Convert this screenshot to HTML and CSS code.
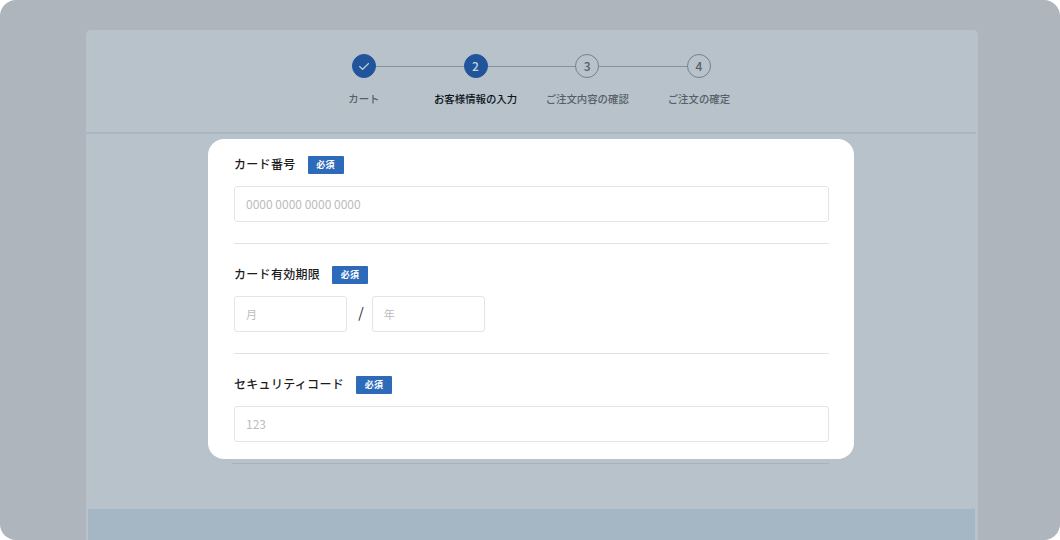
FILE: index.html
```html
<!DOCTYPE html>
<html lang="ja">
<head>
<meta charset="utf-8">
<title>お客様情報の入力</title>
<link rel="stylesheet" href="styles.css">
</head>
<body>
<div class="screen">
  <main class="panel">
    <header class="header">
      <ol class="steps">
        <li class="step step--done">
          <span class="step__mark"><svg class="step__check" viewBox="0 0 24 24"><path d="M7.3 12.2 L10.6 15.3 L16.8 9.2"/></svg></span>
          <span class="step__label">カート</span>
        </li>
        <li class="step step--current">
          <span class="step__mark">2</span>
          <span class="step__label">お客様情報の入力</span>
        </li>
        <li class="step">
          <span class="step__mark">3</span>
          <span class="step__label">ご注文内容の確認</span>
        </li>
        <li class="step">
          <span class="step__mark">4</span>
          <span class="step__label">ご注文の確定</span>
        </li>
      </ol>
    </header>
    <form class="card">
      <section class="field">
        <div class="field__head"><span class="field__label">カード番号</span><span class="badge">必須</span></div>
        <div class="input">0000 0000 0000 0000</div>
      </section>
      <section class="field">
        <div class="field__head"><span class="field__label">カード有効期限</span><span class="badge">必須</span></div>
        <div class="expiry">
          <div class="input input--short">月</div>
          <span class="expiry__slash">/</span>
          <div class="input input--short">年</div>
        </div>
      </section>
      <section class="field field--last">
        <div class="field__head"><span class="field__label">セキュリティコード</span><span class="badge">必須</span></div>
        <div class="input">123</div>
      </section>
    </form>
    <hr class="rule">
    <footer class="footer"></footer>
  </main>
</div>
</body>
</html>
```
FILE: styles.css
```css
* { box-sizing: border-box; }

body {
  margin: 0;
  background: #fff;
  font-family: "Noto Sans CJK JP", sans-serif;
}

.screen {
  width: 1060px;
  height: 540px;
  padding: 30px 82px 0 86px;
  border-radius: 16px;
  background: #aeb5bd;
  overflow: hidden;
}

.panel {
  display: flex;
  flex-direction: column;
  height: 510px;
  border-radius: 5px 5px 0 0;
  background: #b7c2cb;
}

.header {
  height: 104px;
  margin-right: 2px;
  padding-top: 24px;
  border-bottom: 2px solid #aab6c0;
}

.steps {
  display: flex;
  width: 447px;
  margin: 0 0 0 222px;
  padding: 0;
  list-style: none;
}

.step {
  position: relative;
  display: flex;
  flex: none;
  flex-direction: column;
  align-items: center;
  width: 111.7px;
  color: #555f67;
}

.step + .step::before {
  content: "";
  position: absolute;
  top: 12px;
  right: calc(50% + 12px);
  width: 87.7px;
  height: 1px;
  background: #87919a;
}

.step__mark {
  display: flex;
  align-items: center;
  justify-content: center;
  width: 24px;
  height: 24px;
  margin-top: 0.4px;
  border: 1px solid #76808a;
  border-radius: 50%;
  font-size: 12px;
  font-weight: 500;
  line-height: 24px;
}

.step--done .step__mark,
.step--current .step__mark {
  border-color: #20559c;
  background: #20559c;
  color: #c3d1de;
}

.step__check {
  flex: none;
  width: 24px;
  height: 24px;
  fill: none;
  stroke: #b9cbdc;
  stroke-width: 1.2;
}

.step__label {
  margin-top: 12.6px;
  font-size: 10.4px;
  font-weight: 500;
  line-height: 16px;
  white-space: nowrap;
}

.step--current .step__label {
  color: #0c1218;
}

.card {
  flex: none;
  width: 646px;
  height: 320px;
  margin: 5px 0 0 122px;
  padding: 16px 25px 0 26px;
  border-radius: 16px;
  background: #fff;
}

.field {
  height: 110.2px;
}

.field:not(.field--last)::after {
  content: "";
  display: block;
  height: 1px;
  margin-top: 21px;
  background: #e1e2e3;
}

.field__head {
  display: flex;
  align-items: center;
  gap: 12px;
  height: 19px;
}

.field__label {
  margin-top: -2px;
  color: #1c1c1e;
  font-size: 12px;
  font-weight: 500;
  line-height: 18px;
  letter-spacing: 0.3px;
}

.badge {
  width: 36px;
  height: 18px;
  border-radius: 1px;
  background: #2e6aba;
  color: #fff;
  font-size: 9px;
  font-weight: 700;
  line-height: 17px;
  letter-spacing: 0.3px;
  text-align: center;
}

.input {
  height: 36px;
  margin-top: 12px;
  padding-left: 11px;
  border: 1px solid #e4e4e5;
  border-radius: 3px;
  color: #bcbcbe;
  font-size: 12px;
  line-height: 33px;
}

.expiry {
  display: flex;
}

.input--short {
  width: 113.4px;
  font-size: 11px;
  line-height: 34px;
}

.expiry__slash {
  width: 24.4px;
  margin-top: 12px;
  padding-left: 3px;
  color: #1c1c1e;
  font-size: 14px;
  line-height: 33px;
  text-align: center;
}

.rule {
  flex: none;
  width: 597px;
  height: 1px;
  margin: 4px 0 0 146px;
  border: 0;
  background: #a3b4bf;
}

.footer {
  flex: 1;
  margin: 45px 3px 0 2px;
  background: #a5b7c4;
}
```
